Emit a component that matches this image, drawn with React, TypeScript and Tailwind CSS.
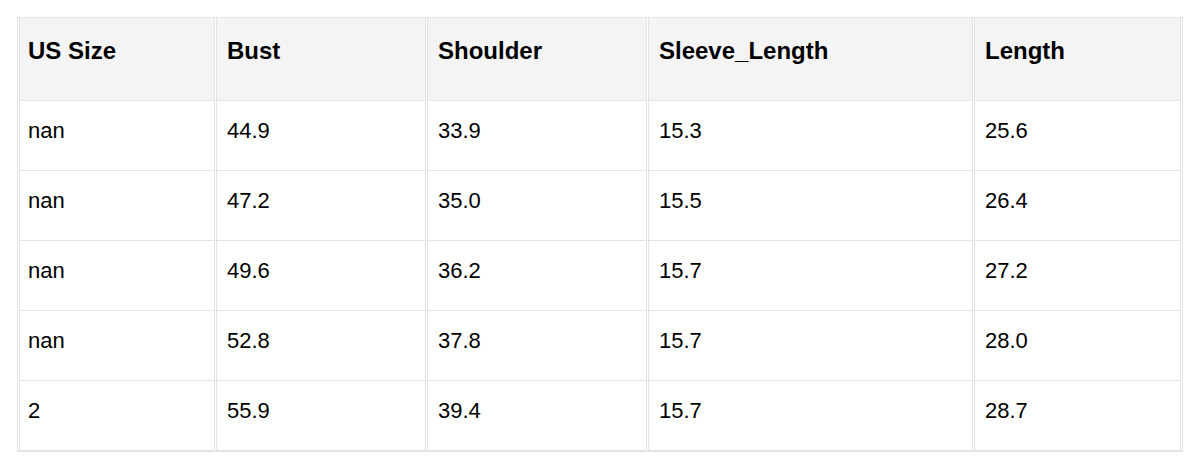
import React from 'react';

const headers = ['US Size', 'Bust', 'Shoulder', 'Sleeve_Length', 'Length'];

const rows = [
  ['nan', '44.9', '33.9', '15.3', '25.6'],
  ['nan', '47.2', '35.0', '15.5', '26.4'],
  ['nan', '49.6', '36.2', '15.7', '27.2'],
  ['nan', '52.8', '37.8', '15.7', '28.0'],
  ['2', '55.9', '39.4', '15.7', '28.7'],
];

// column widths measured from the screenshot
const widths = ['w-[196px]', 'w-[210px]', 'w-[220px]', 'w-[325px]', 'w-[207px]'];

export default function App() {
  return (
    <div className="h-[467px] w-[1200px] bg-white pl-[17px] pt-[17px] font-['Liberation_Sans',Arial,sans-serif] text-black">
      <table className="w-[1166px] table-fixed border-separate border border-[#e3e3e3] border-spacing-x-[1px] border-spacing-y-0">
        <colgroup>
          {widths.map((w, i) => (
            <col key={i} className={w} />
          ))}
        </colgroup>
        <thead>
          <tr>
            {headers.map((h, i) => (
              <th
                key={h}
                className={
                  'h-[83px] border-x border-b border-[#e3e3e3] bg-[#f4f4f4] pr-[8px] pb-[16px] text-left align-middle text-[24px] font-bold ' +
                  (i === 0 ? 'pl-[8px]' : 'pl-[10px]')
                }
              >
                {h}
              </th>
            ))}
          </tr>
        </thead>
        <tbody>
          {rows.map((row, r) => (
            <tr key={r}>
              {row.map((cell, c) => (
                <td
                  key={c}
                  className={
                    'h-[70px] border-x border-b border-[#e3e3e3] pr-[8px] pb-[10px] align-middle text-[22px] ' +
                    (c === 0 ? 'pl-[8px]' : 'pl-[10px]')
                  }
                >
                  {cell}
                </td>
              ))}
            </tr>
          ))}
        </tbody>
      </table>
    </div>
  );
}
